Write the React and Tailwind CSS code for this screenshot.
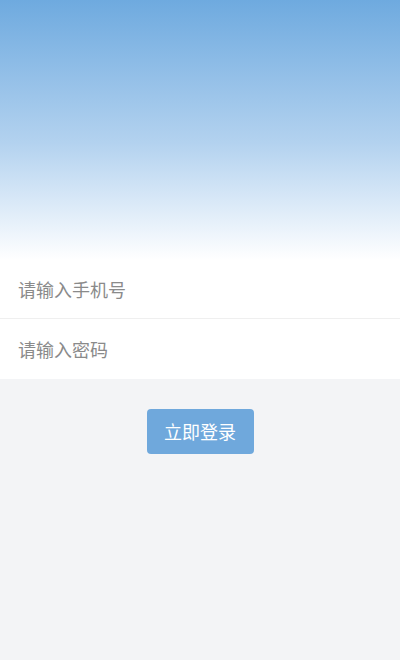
import React, { useState } from 'react';

export default function App() {
  const [phone, setPhone] = useState('');
  const [password, setPassword] = useState('');

  return (
    <div
      className="min-h-[660px] bg-[#f3f4f6] flex flex-col"
      style={{ fontFamily: '"Noto Sans CJK SC", "Noto Sans", sans-serif' }}
    >
      {/* header gradient */}
      <div className="h-[260px] bg-linear-to-b from-[#6eaadf] via-[#b3d2ef] via-55% to-white" />

      <div className="bg-white">
        <div className="h-[59px] flex items-center px-[18px] border-b border-[#efefef]">
          <input
            type="tel"
            value={phone}
            onChange={(e) => setPhone(e.target.value)}
            placeholder="请输入手机号"
            className="w-full text-[18px] text-[#333] placeholder:text-[#8a8a8a] outline-none bg-transparent"
          />
        </div>
        <div className="h-[60px] flex items-center px-[18px]">
          <input
            type="password"
            value={password}
            onChange={(e) => setPassword(e.target.value)}
            placeholder="请输入密码"
            className="w-full text-[18px] text-[#333] placeholder:text-[#8a8a8a] outline-none bg-transparent"
          />
        </div>
      </div>

      <div className="flex justify-center pt-[30px]">
        <button
          type="button"
          className="w-[107px] h-[45px] rounded-[4px] bg-[#6fa8dc] text-white text-[18px]"
        >
          立即登录
        </button>
      </div>
    </div>
  );
}
